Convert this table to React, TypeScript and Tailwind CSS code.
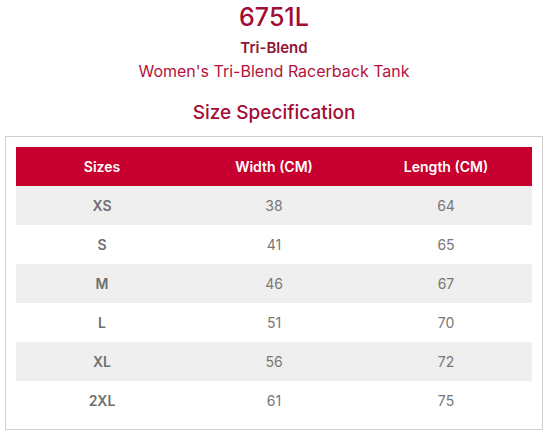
export default function App() {
  const rows = [
    ["XS", "38", "64"],
    ["S", "41", "65"],
    ["M", "46", "67"],
    ["L", "51", "70"],
    ["XL", "56", "72"],
    ["2XL", "61", "75"],
  ];

  return (
    <div className="w-[548px] h-[437px] bg-white font-['Inter',sans-serif] flex flex-col items-center">
      {/* Heading */}
      <h1 className="mt-[3px] text-[25px] leading-[28px] font-medium text-[#a10d34]">6751L</h1>
      <p className="mt-[8px] text-[15px] leading-[18px] font-semibold text-[#8e1536]">Tri-Blend</p>
      <p className="mt-[4px] text-[16px] leading-[20px] text-[#b3123d]">Women's Tri-Blend Racerback Tank</p>
      <h2 className="mt-[21px] text-[19px] leading-[22px] font-medium text-[#a30d35]">Size Specification</h2>

      {/* Table box */}
      <div className="mt-[12px] self-start ml-[5px] w-[538px] border border-[#cfcfcf] px-[10px] pt-[10px] pb-[9px]">
        <div className="grid grid-cols-3 bg-[#c8002f] h-[39px] items-center text-[14px] font-semibold text-white text-center">
          <span>Sizes</span>
          <span>Width (CM)</span>
          <span>Length (CM)</span>
        </div>
        {rows.map((r, i) => (
          <div
            key={r[0]}
            className={`grid grid-cols-3 h-[39px] items-center text-[14px] text-center text-[#777777] ${i % 2 === 0 ? "bg-[#efefef]" : "bg-white"}`}
          >
            <span className="font-semibold text-[#6e6e6e]">{r[0]}</span>
            <span>{r[1]}</span>
            <span>{r[2]}</span>
          </div>
        ))}
      </div>
    </div>
  );
}
